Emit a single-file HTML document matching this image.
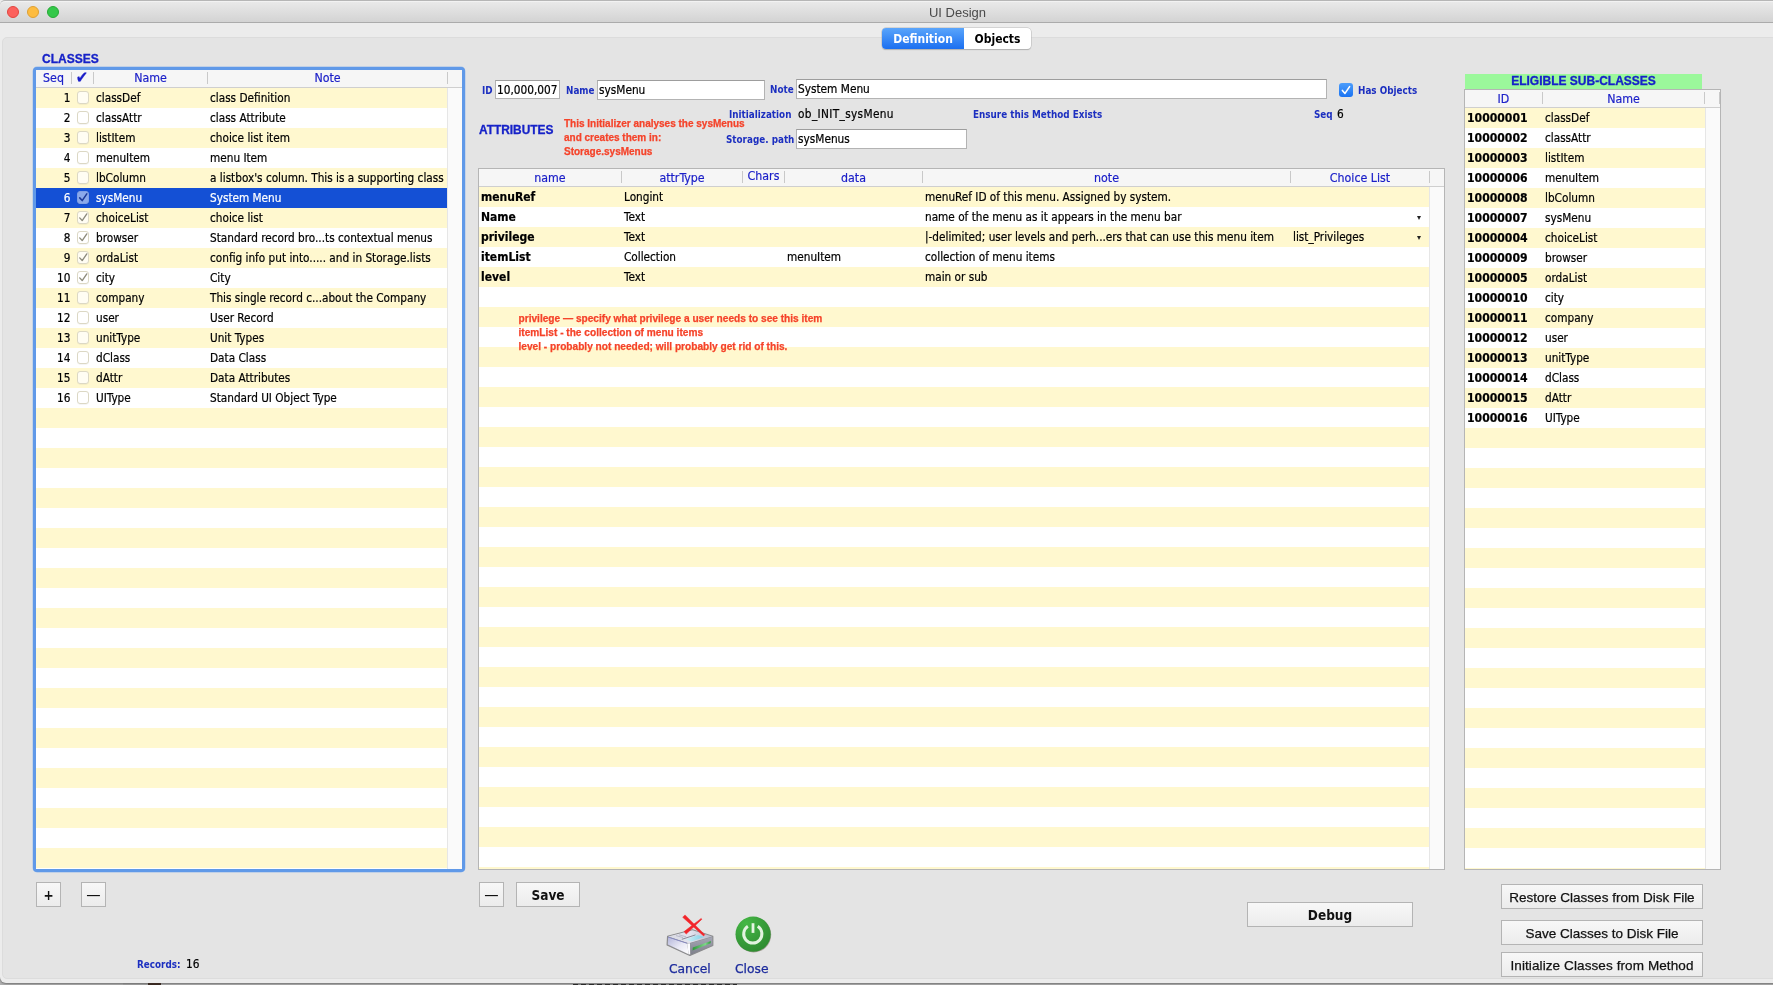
<!DOCTYPE html>
<html lang="en"><head><meta charset="utf-8"><title>UI Design</title>
<style>
*{box-sizing:border-box;margin:0;padding:0}
html,body{width:1773px;height:985px;overflow:hidden}
body{position:relative;will-change:transform;background:#b1b1b1;font-family:"DejaVu Sans Condensed","DejaVu Sans","Liberation Sans",sans-serif;font-size:11.7px;color:#000}
.abs,body>div,body>span,body>svg{position:absolute}
#win{left:0;top:0;width:1780px;height:983px;background:#ececec;border-radius:0 0 0 6px;box-shadow:0 1px 2px rgba(0,0,0,.35)}
#tb{left:0;top:0;width:1780px;height:23px;background:linear-gradient(#eaeaea,#d3d3d3);border-bottom:1px solid #ababab;border-top:1px solid #b6b6b6;border-radius:5px 0 0 0;box-shadow:inset 0 1px 0 #f2f2f2}
#title{left:0;top:5px;width:1915px;text-align:center;font-family:"Liberation Sans",sans-serif;font-size:13px;color:#4a4a4a;white-space:nowrap}
.tl{width:12px;height:12px;border-radius:50%;top:6px}
#panel{left:1.5px;top:37px;width:1775px;height:941.5px;background:#e4e4e4;border-radius:5px;border:1px solid #dcdcdc}
#tabs{left:882px;top:28px;width:149px;height:20.5px;border-radius:4px;background:#fff;box-shadow:0 0 0 .5px #b9b9b9,0 1px 1px rgba(0,0,0,.25);overflow:hidden}
#tabs span{position:absolute;top:0;height:21px;line-height:22.5px;text-align:center;font-weight:bold;font-size:12px}
#tabs .t1{left:0;width:82px;background:linear-gradient(#5aa5fb,#1b6ff0);color:#fff}
#tabs .t2{left:82px;width:67px;color:#000}
.helv{font-family:"Liberation Sans",sans-serif;font-weight:bold;color:#1622c8;white-space:nowrap;-webkit-text-stroke:.3px currentColor}
.lbl{font-weight:bold;font-size:10.6px;color:#1c2fc0;white-space:nowrap;line-height:14px;transform:scaleX(.925);transform-origin:0 0}
.val{-webkit-text-stroke:.2px currentColor;font-size:11.75px;white-space:nowrap;line-height:14px}
.inp{-webkit-text-stroke:.2px currentColor;background:#fff;border:1px solid #b3b3b3;border-top-color:#9d9d9d;font-size:11.75px;line-height:19px;padding-left:1px;white-space:nowrap;overflow:hidden}
.red{-webkit-text-stroke:.25px currentColor;font-family:"Liberation Sans",sans-serif;font-weight:bold;font-size:10px;color:#f5432a;line-height:14px;white-space:nowrap}
.rednote{-webkit-text-stroke:.25px currentColor;font-family:"Liberation Sans",sans-serif;font-weight:bold;font-size:10.15px;color:#f5432a;line-height:14px;white-space:nowrap}
/* listboxes */
.ring{left:32.5px;top:66.5px;width:432.1px;height:805.7px;border-radius:4px;background:#6099e8;box-shadow:0 0 0 .4px rgba(110,165,238,.6)}
.lb{background:#fff;overflow:hidden}
#lbC{left:36px;top:70px;width:426px;height:799px}
#lbA{left:478px;top:168px;width:967px;height:702px;border:1px solid #b5b5b5}
#lbS{left:1464px;top:89px;width:257px;height:781px;border:1px solid #b5b5b5}
.hd{position:absolute;left:0;top:0;right:0;height:18px;background:#f6f6f6;border-bottom:1px solid #cfcfcf}
.hd .h{-webkit-text-stroke:.2px currentColor;position:absolute;top:1px;height:17px;line-height:17px;text-align:center;color:#1a1ec8;font-size:12.3px;white-space:nowrap}
.hd .sp{position:absolute;top:2px;width:1px;height:12px;background:#c9c9c9}
.rows{position:absolute;left:0;top:18px}
.r{position:relative;height:20px;background:#fff;white-space:nowrap}
.r.y{background:#fff8cf}
.r.sel{background:#1450d5;color:#fff}
.c{position:absolute;top:0;height:20px;line-height:20px;white-space:nowrap;-webkit-text-stroke:.2px currentColor}
.sb{position:absolute;top:18px;bottom:0;right:0;width:15px;background:#fafafa;border-left:1px solid #e6e6e6}
#lbC .rows{width:411px}
#lbC .seq{left:0;width:34.5px;text-align:right}
#lbC .nm{left:60px}
#lbC .nt{left:174px}
.cb{position:absolute;left:40.6px;top:3.3px;width:12.6px;height:12.4px;border-radius:3px;background:rgba(255,255,255,.75);border:1px solid #dcd8c4;box-shadow:0 .5px .5px rgba(0,0,0,.08)}
.cb svg{position:absolute;left:-1px;top:-1px;width:12.5px;height:12.5px;fill:none;stroke:#8d8b7d;stroke-width:1.3;stroke-linecap:round;stroke-linejoin:round}
.r.sel .cb{background:#8aa9ea;border-color:#7f9fe4}
.r.sel .cb svg{stroke:#1c3a98;stroke-width:1.5}
#lbA .rows{width:950px}
#lbA .hd{right:0}
#lbA .a1{left:2px;font-weight:bold;font-size:12px}
#lbA .a2{left:145px}
#lbA .a3{left:308px}
#lbA .a4{left:446px}
#lbA .a5{left:814px}
.dd{position:absolute;left:938.1px;top:8.8px;width:0;height:0;border-left:2.7px solid transparent;border-right:2.7px solid transparent;border-top:4.4px solid #222}
#lbS .rows{width:240px}
#lbS .s1{left:2px;font-weight:bold;font-size:12.1px}
#lbS .s2{left:80px}
.green{left:1465px;top:74px;width:237px;height:15px;background:#9bf89b;text-align:center;font-family:"Liberation Sans",sans-serif;font-weight:bold;font-size:12px;line-height:15px;color:#1622c8;white-space:nowrap;-webkit-text-stroke:.3px currentColor}
/* buttons */
.btn{background:linear-gradient(#f7f7f7,#ececec);border:1px solid #b4b4b4;text-align:center;white-space:nowrap;color:#111}
.btn.sys{font-family:"Liberation Sans",sans-serif;font-size:13.5px;-webkit-text-stroke:.25px currentColor}
.btn.bold{font-weight:bold;font-size:13.5px}
.ilbl{font-size:12.9px;transform:scaleX(1.06);transform-origin:0 0;color:#1b2a9c;white-space:nowrap;line-height:16px;-webkit-text-stroke:.25px #1b2a9c}
#lbC .hd .h{top:0}

</style></head>
<body>
<div id="win"></div>
<div id="tb"></div>
<div class="tl" style="left:7px;background:#fc615d;border:1px solid #e2463f"></div>
<div class="tl" style="left:27px;background:#fdbc40;border:1px solid #dfa032"></div>
<div class="tl" style="left:47px;background:#34c84a;border:1px solid #27aa35"></div>
<div id="title">UI Design</div>
<div id="panel"></div>
<div id="tabs"><span class="t1">Definition</span><span class="t2">Objects</span></div>
<div class="helv" style="left:42px;top:52px;font-size:12px;line-height:14px">CLASSES</div>

<div class="lbl" style="left:482px;top:83px">ID</div>
<div class="inp" style="left:495px;top:80px;width:65px;height:19px">10,000,007</div>
<div class="lbl" style="left:566px;top:83px">Name</div>
<div class="inp" style="left:597px;top:80px;width:168px;height:20px">sysMenu</div>
<div class="lbl" style="left:770px;top:82px">Note</div>
<div class="inp" style="left:796px;top:79px;width:531px;height:20px">System Menu</div>
<div id="hasobj" style="left:1339px;top:83px;width:14px;height:14px;border-radius:3px;background:linear-gradient(#4c9dfb,#1a73f2)"><svg viewBox="0 0 14 14" width="14" height="14" style="position:absolute;left:0;top:0"><path d="M3.4 7.4 L6 10.4 L10.6 3.6" fill="none" stroke="#fff" stroke-width="1.6" stroke-linecap="round" stroke-linejoin="round"/></svg></div>
<div class="lbl" style="left:1358px;top:83px">Has Objects</div>

<div class="lbl" style="left:729px;top:107px">Initialization</div>
<div class="val" style="left:798px;top:107px;letter-spacing:.35px">ob_INIT_sysMenu</div>
<div class="lbl" style="left:973px;top:107px">Ensure this Method Exists</div>
<div class="lbl" style="left:1314px;top:107px">Seq</div>
<div class="val" style="left:1337px;top:107px">6</div>

<div class="helv" style="left:479px;top:123px;font-size:11.9px;line-height:14px">ATTRIBUTES</div>
<div class="red" style="left:564px;top:117px">This Initializer analyses the sysMenus<br>and creates them in:<br>Storage.sysMenus</div>
<div class="lbl" style="left:726px;top:132px">Storage. path</div>
<div class="inp" style="left:796px;top:129px;width:171px;height:20px">sysMenus</div>
<div class="ring"></div>
<div class="lb" id="lbC">
<div class="hd"><span class="h" style="left:0;width:35px">Seq</span><i class="sp" style="left:35px"></i><span class="h" style="left:35.5px;width:21px;font-size:16.5px;font-weight:bold;top:-1.5px">✔</span><i class="sp" style="left:57px"></i><span class="h" style="left:58px;width:113px">Name</span><i class="sp" style="left:171px"></i><span class="h" style="left:172px;width:239px">Note</span><i class="sp" style="left:411px"></i></div>
<div class="rows">
<div class="r y"><span class="c seq">1</span><b class="cb"></b><span class="c nm">classDef</span><span class="c nt">class Definition</span></div>
<div class="r"><span class="c seq">2</span><b class="cb"></b><span class="c nm">classAttr</span><span class="c nt">class Attribute</span></div>
<div class="r y"><span class="c seq">3</span><b class="cb"></b><span class="c nm">listItem</span><span class="c nt">choice list item</span></div>
<div class="r"><span class="c seq">4</span><b class="cb"></b><span class="c nm">menuItem</span><span class="c nt">menu Item</span></div>
<div class="r y"><span class="c seq">5</span><b class="cb"></b><span class="c nm">lbColumn</span><span class="c nt">a listbox's column. This is a supporting class</span></div>
<div class="r sel"><span class="c seq">6</span><b class="cb on"><svg viewBox="0 0 12 12"><path d="M2.6 6.6 L5 9.2 L9.4 2.8"/></svg></b><span class="c nm">sysMenu</span><span class="c nt">System Menu</span></div>
<div class="r y"><span class="c seq">7</span><b class="cb on"><svg viewBox="0 0 12 12"><path d="M2.6 6.6 L5 9.2 L9.4 2.8"/></svg></b><span class="c nm">choiceList</span><span class="c nt">choice list</span></div>
<div class="r"><span class="c seq">8</span><b class="cb on"><svg viewBox="0 0 12 12"><path d="M2.6 6.6 L5 9.2 L9.4 2.8"/></svg></b><span class="c nm">browser</span><span class="c nt">Standard record bro...ts contextual menus</span></div>
<div class="r y"><span class="c seq">9</span><b class="cb on"><svg viewBox="0 0 12 12"><path d="M2.6 6.6 L5 9.2 L9.4 2.8"/></svg></b><span class="c nm">ordaList</span><span class="c nt">config info put into..... and in Storage.lists</span></div>
<div class="r"><span class="c seq">10</span><b class="cb on"><svg viewBox="0 0 12 12"><path d="M2.6 6.6 L5 9.2 L9.4 2.8"/></svg></b><span class="c nm">city</span><span class="c nt">City</span></div>
<div class="r y"><span class="c seq">11</span><b class="cb"></b><span class="c nm">company</span><span class="c nt">This single record c...about the Company</span></div>
<div class="r"><span class="c seq">12</span><b class="cb"></b><span class="c nm">user</span><span class="c nt">User Record</span></div>
<div class="r y"><span class="c seq">13</span><b class="cb"></b><span class="c nm">unitType</span><span class="c nt">Unit Types</span></div>
<div class="r"><span class="c seq">14</span><b class="cb"></b><span class="c nm">dClass</span><span class="c nt">Data Class</span></div>
<div class="r y"><span class="c seq">15</span><b class="cb"></b><span class="c nm">dAttr</span><span class="c nt">Data Attributes</span></div>
<div class="r"><span class="c seq">16</span><b class="cb"></b><span class="c nm">UIType</span><span class="c nt">Standard UI Object Type</span></div>
<div class="r y"></div>
<div class="r"></div>
<div class="r y"></div>
<div class="r"></div>
<div class="r y"></div>
<div class="r"></div>
<div class="r y"></div>
<div class="r"></div>
<div class="r y"></div>
<div class="r"></div>
<div class="r y"></div>
<div class="r"></div>
<div class="r y"></div>
<div class="r"></div>
<div class="r y"></div>
<div class="r"></div>
<div class="r y"></div>
<div class="r"></div>
<div class="r y"></div>
<div class="r"></div>
<div class="r y"></div>
<div class="r"></div>
<div class="r y"></div>
</div><div class="sb"></div></div>
<div class="lb" id="lbA">
<div class="hd"><span class="h" style="left:0;width:142px">name</span><i class="sp" style="left:142px"></i><span class="h" style="left:143px;width:120px">attrType</span><i class="sp" style="left:263px"></i><span class="h" style="left:264px;width:41px;top:-1px">Chars</span><i class="sp" style="left:305px"></i><span class="h" style="left:306px;width:137px">data</span><i class="sp" style="left:443px"></i><span class="h" style="left:444px;width:367px">note</span><i class="sp" style="left:811px"></i><span class="h" style="left:812px;width:138px">Choice List</span><i class="sp" style="left:950px"></i></div>
<div class="rows">
<div class="r y"><span class="c a1">menuRef</span><span class="c a2">Longint</span><span class="c a3"></span><span class="c a4">menuRef ID of this menu. Assigned by system.</span><span class="c a5"></span></div>
<div class="r"><span class="c a1">Name</span><span class="c a2">Text</span><span class="c a3"></span><span class="c a4">name of the menu as it appears in the menu bar</span><span class="c a5"></span><i class="dd"></i></div>
<div class="r y"><span class="c a1">privilege</span><span class="c a2">Text</span><span class="c a3"></span><span class="c a4">|-delimited; user levels and perh...ers that can use this menu item</span><span class="c a5">list_Privileges</span><i class="dd"></i></div>
<div class="r"><span class="c a1">itemList</span><span class="c a2">Collection</span><span class="c a3">menuItem</span><span class="c a4">collection of menu items</span><span class="c a5"></span></div>
<div class="r y"><span class="c a1">level</span><span class="c a2">Text</span><span class="c a3"></span><span class="c a4">main or sub</span><span class="c a5"></span></div>
<div class="r"></div>
<div class="r y"></div>
<div class="r"></div>
<div class="r y"></div>
<div class="r"></div>
<div class="r y"></div>
<div class="r"></div>
<div class="r y"></div>
<div class="r"></div>
<div class="r y"></div>
<div class="r"></div>
<div class="r y"></div>
<div class="r"></div>
<div class="r y"></div>
<div class="r"></div>
<div class="r y"></div>
<div class="r"></div>
<div class="r y"></div>
<div class="r"></div>
<div class="r y"></div>
<div class="r"></div>
<div class="r y"></div>
<div class="r"></div>
<div class="r y"></div>
<div class="r"></div>
<div class="r y"></div>
<div class="r"></div>
<div class="r y"></div>
<div class="r"></div>
<div class="r y"></div>
</div><div class="sb"></div></div>
<div class="rednote" style="left:518.5px;top:312px">privilege — specify what privilege a user needs to see this item<br>itemList - the collection of menu items<br>level - probably not needed; will probably get rid of this.</div>
<div class="green">ELIGIBLE SUB-CLASSES</div>
<div class="lb" id="lbS">
<div class="hd"><span class="h" style="left:0;width:77px">ID</span><i class="sp" style="left:77px"></i><span class="h" style="left:78px;width:161px">Name</span><i class="sp" style="left:239px"></i><i class="sp" style="left:254px"></i></div>
<div class="rows">
<div class="r y"><span class="c s1">10000001</span><span class="c s2">classDef</span></div>
<div class="r"><span class="c s1">10000002</span><span class="c s2">classAttr</span></div>
<div class="r y"><span class="c s1">10000003</span><span class="c s2">listItem</span></div>
<div class="r"><span class="c s1">10000006</span><span class="c s2">menuItem</span></div>
<div class="r y"><span class="c s1">10000008</span><span class="c s2">lbColumn</span></div>
<div class="r"><span class="c s1">10000007</span><span class="c s2">sysMenu</span></div>
<div class="r y"><span class="c s1">10000004</span><span class="c s2">choiceList</span></div>
<div class="r"><span class="c s1">10000009</span><span class="c s2">browser</span></div>
<div class="r y"><span class="c s1">10000005</span><span class="c s2">ordaList</span></div>
<div class="r"><span class="c s1">10000010</span><span class="c s2">city</span></div>
<div class="r y"><span class="c s1">10000011</span><span class="c s2">company</span></div>
<div class="r"><span class="c s1">10000012</span><span class="c s2">user</span></div>
<div class="r y"><span class="c s1">10000013</span><span class="c s2">unitType</span></div>
<div class="r"><span class="c s1">10000014</span><span class="c s2">dClass</span></div>
<div class="r y"><span class="c s1">10000015</span><span class="c s2">dAttr</span></div>
<div class="r"><span class="c s1">10000016</span><span class="c s2">UIType</span></div>
<div class="r y"></div>
<div class="r"></div>
<div class="r y"></div>
<div class="r"></div>
<div class="r y"></div>
<div class="r"></div>
<div class="r y"></div>
<div class="r"></div>
<div class="r y"></div>
<div class="r"></div>
<div class="r y"></div>
<div class="r"></div>
<div class="r y"></div>
<div class="r"></div>
<div class="r y"></div>
<div class="r"></div>
<div class="r y"></div>
<div class="r"></div>
<div class="r y"></div>
<div class="r"></div>
<div class="r y"></div>
<div class="r"></div>
<div class="r y"></div>
</div><div class="sb"></div></div>
<div class="btn bold" style="left:36px;top:882px;width:25px;height:25px;line-height:25px;font-size:13.5px">+</div>
<div class="btn" style="left:81px;top:882px;width:25px;height:25px;line-height:23.5px;font-size:16px">—</div>
<div class="btn" style="left:479px;top:882px;width:25px;height:25px;line-height:23.5px;font-size:16px">—</div>
<div class="btn bold" style="left:516px;top:882px;width:64px;height:25px;line-height:25px">Save</div>
<div class="lbl" style="left:137px;top:957px">Records:</div>
<div class="val" style="left:186px;top:957px">16</div>

<svg id="cancelico" style="left:660px;top:910px" width="60" height="50" viewBox="0 0 60 50">
 <defs>
  <linearGradient id="gTop" x1="0" y1="0" x2="1" y2="0"><stop offset="0" stop-color="#d9dae2"/><stop offset=".5" stop-color="#e3e3ee"/><stop offset="1" stop-color="#b7b9c9"/></linearGradient>
  <linearGradient id="gLeft" x1="0" y1="0" x2="1" y2="1"><stop offset="0" stop-color="#b3b5da"/><stop offset=".55" stop-color="#e9e9f5"/><stop offset="1" stop-color="#ffffff"/></linearGradient>
  <linearGradient id="gRight" x1="0" y1="0" x2="0" y2="1"><stop offset="0" stop-color="#a6a8b6"/><stop offset="1" stop-color="#7d7f8a"/></linearGradient>
  <linearGradient id="gCy" x1="0" y1="0" x2="1" y2="0"><stop offset="0" stop-color="#d4f0f6"/><stop offset="1" stop-color="#7fcfe6"/></linearGradient>
  <linearGradient id="gLed" x1="0" y1="0" x2="1" y2="0"><stop offset="0" stop-color="#2c9638"/><stop offset=".7" stop-color="#7fd78a"/><stop offset="1" stop-color="#2f9a3b"/></linearGradient>
 </defs>
 <path d="M7.6 26.4 L32.5 19.8 L52.8 26.4 L52.8 35.5 L29.9 45.5 L7.1 35 Z" fill="#8b8b8d" stroke="#8b8b8d" stroke-width="1.2" stroke-linejoin="round"/>
 <path d="M8 26.5 L32.5 20.3 L52.3 26.6 L28.6 33.2 Z" fill="url(#gTop)"/>
 <path d="M8.1 27.2 L27.2 33.6 L28.6 44.3 L7.8 34.6 Z" fill="url(#gLeft)"/>
 <path d="M8.1 27 L27.3 33.4" stroke="#8488c4" stroke-width=".9" fill="none"/>
 <path d="M27.2 33.6 L30 33.2 L30.3 44.6 L28.6 44.3 Z" fill="#fbfbff"/>
 <path d="M30.3 33.2 L52.3 27 L52.3 35.2 L30.6 44.7 Z" fill="url(#gRight)"/>
 <path d="M21.8 29.3 L35.5 24.9" stroke="#80818f" stroke-width=".9" fill="none"/>
 <path d="M16 25.6 L23 27.6 M19 24.8 L26 26.8" stroke="#b4b5c6" stroke-width=".9" fill="none"/>
 <path d="M25.4 29.5 L37.6 24.9 L44.2 26.9 L31.5 31.6 Z" fill="url(#gCy)"/>
 <path d="M32.8 37.4 L50.8 30.9 L50.6 33.2 L32.6 40.6 Z" fill="url(#gLed)"/>
 <path d="M25 4.9 L22.7 7.3 L43.6 25.9 L44.8 24.7 Z" fill="#f2252a" stroke="#f2252a" stroke-width=".5" stroke-linejoin="round"/>
 <path d="M41.9 9.2 L41.2 8.4 L24.1 21.6 L26.2 24.1 Z" fill="#f2252a" stroke="#f2252a" stroke-width=".5" stroke-linejoin="round"/>
</svg>
<div class="ilbl" style="left:669px;top:960.5px">Cancel</div>

<svg id="closeico" style="left:728px;top:910px" width="50" height="50" viewBox="0 0 50 50">
 <defs><radialGradient id="gGreen" cx=".3" cy=".2" r=".9"><stop offset="0" stop-color="#45b845"/><stop offset=".55" stop-color="#389d3a"/><stop offset="1" stop-color="#2e8a30"/></radialGradient></defs>
 <circle cx="25.6" cy="24.8" r="17.6" fill="#5a4c3c" opacity=".45"/>
 <circle cx="25.1" cy="24.2" r="17.6" fill="url(#gGreen)"/>
 <path d="M19.85 16.3 A9.1 9.1 0 1 0 29.75 16.3" fill="none" stroke="#e2f3df" stroke-width="3"/>
 <path d="M25 13.2 L25 22.9" stroke="#e6f5e2" stroke-width="2.8"/>
</svg>
<div class="ilbl" style="left:735px;top:960.5px">Close</div>

<div class="btn bold" style="left:1247px;top:902px;width:166px;height:25px;line-height:25px">Debug</div>
<div class="btn sys" style="left:1501px;top:884px;width:202px;height:25px;line-height:25.5px">Restore Classes from Disk File</div>
<div class="btn sys" style="left:1501px;top:920px;width:202px;height:25px;line-height:25.5px">Save Classes to Disk File</div>
<div class="btn sys" style="left:1501px;top:952px;width:202px;height:25px;line-height:25.5px;letter-spacing:.1px">Initialize Classes from Method</div>
<div style="left:123px;top:983px;width:25px;height:2px;background:rgba(0,0,0,.06)"></div>
<div style="left:148px;top:983px;width:13px;height:2px;background:#3a2a22"></div>
<div style="left:573px;top:983.5px;width:164px;height:1.5px;background:repeating-linear-gradient(90deg,#2a2a2a 0 5px,rgba(60,60,60,.35) 5px 8px)"></div>
</body></html>
